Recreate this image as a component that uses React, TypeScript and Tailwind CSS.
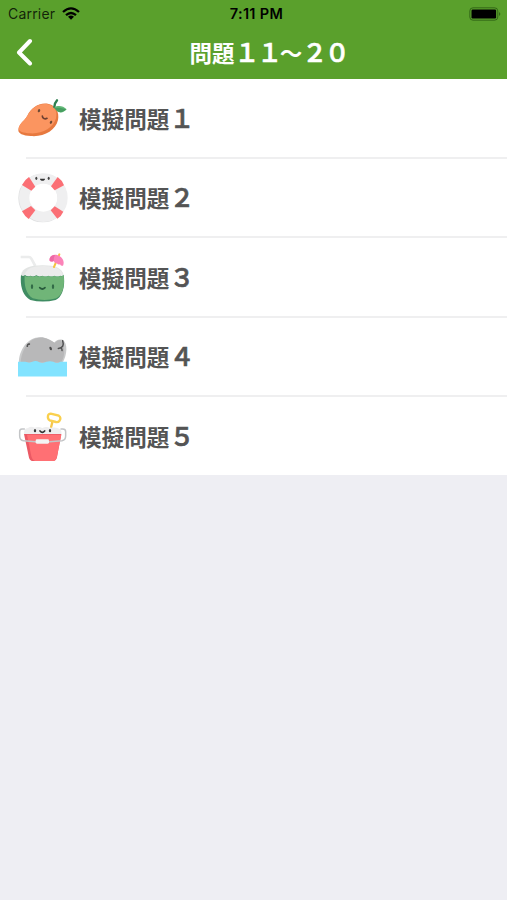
import type { ReactNode } from 'react'

interface Item {
  id: number
  label: string
  digit: string
  icon: ReactNode
}

function MangoIcon() {
  return (
    <svg width="50" height="50" viewBox="24 24 150 150" fill="none">
      <path d="M25 134C27 116 42 110 52 92C64 68 88 51 116 57C137 61 149 82 144 105C137 136 101 157 62 153C39 151 24 146 25 134Z" fill="#e7793f" />
      <path d="M26 129C29 114 43 108 53 91C65 68 88 53 114 58C134 62 143 80 138 100C130 129 97 147 61 145C40 144 25 140 26 129Z" fill="#fb9560" />
      <path d="M133 66C134 57 136 51 141 46" stroke="#2f7f50" strokeWidth="7" strokeLinecap="round" />
      <path d="M133 67C142 60 160 61 170 73C159 86 143 87 133 67Z" fill="#62b878" />
      <path d="M134 69C145 67 157 69 169 73C157 85 142 85 134 69Z" fill="#469e60" />
      <ellipse cx="87" cy="77" rx="3.5" ry="5" fill="#6e4a35" transform="rotate(25 87 77)" />
      <ellipse cx="123" cy="112" rx="3.5" ry="5" fill="#6e4a35" transform="rotate(25 123 112)" />
      <path d="M97 93C97 101 105 103 111 100" stroke="#6e4030" strokeWidth="5" strokeLinecap="round" />
    </svg>
  )
}

function LifebuoyIcon() {
  return (
    <svg width="50" height="50" viewBox="24 30 150 150" fill="none">
      <circle cx="98" cy="105" r="59" stroke="#dedfe0" strokeWidth="28" />
      <circle cx="100" cy="104" r="57.5" stroke="#efeff0" strokeWidth="31" />
      <path d="M36 66Q44 50 57 42L76 71L64 83Z" fill="#fb6f75" />
      <path d="M143 42Q156 51 162 67L134 82L123 70Z" fill="#fb6f75" />
      <path d="M36 145L63 129L76 142L56 168Q44 160 36 145Z" fill="#fb6f75" />
      <path d="M134 130L160 146Q154 160 142 167L122 142Z" fill="#fb6f75" />
      <ellipse cx="79" cy="46" rx="3" ry="5" fill="#444" />
      <ellipse cx="116" cy="46" rx="3" ry="5" fill="#444" />
      <path d="M90 47C90 55 105 55 105 47Z" fill="#333" />
    </svg>
  )
}

function CoconutIcon() {
  return (
    <svg width="50" height="50" viewBox="24 27 150 150" fill="none">
      <path d="M32 42H57Q61 42 64 47L76 69" stroke="#ebecec" strokeWidth="8" />
      <path d="M33 95C39 75 58 67 98 67C137 67 155 76 161 96L158 110H36Z" fill="#e2e4e3" />
      <path d="M44 96C49 77 66 69 100 69C137 69 154 78 159 96L157 108H48Z" fill="#ececec" />
      <path d="M33 96Q39 102 45 96Q53 103 61 98Q70 103 79 97Q88 103 97 98Q106 103 115 98Q124 103 133 98Q142 103 151 98Q156 101 161 96C166 126 159 161 137 171Q98 180 61 171C36 157 30 125 33 96Z" fill="#3f8c62" />
      <path d="M44 98Q53 104 61 99Q70 104 79 98Q88 104 97 99Q106 104 115 99Q124 104 133 99Q142 104 151 99Q156 101 161 97C165 128 158 156 139 166Q104 176 68 166C48 153 42 126 44 98Z" fill="#70b578" />
      <ellipse cx="66" cy="131" rx="3.5" ry="7" fill="#326b47" />
      <ellipse cx="129" cy="131" rx="3.5" ry="7" fill="#326b47" />
      <path d="M89 134Q97 142 105 134" stroke="#285b3c" strokeWidth="5" strokeLinecap="round" />
      <path d="M148 34L132 72" stroke="#f4c342" strokeWidth="6" strokeLinecap="round" />
      <path d="M119 53C117 40 130 32 143 37C157 42 165 55 159 68Q153 70 150 64Q144 66 140 60Q134 62 131 54Q125 58 119 53Z" fill="#fb83b8" />
      <path d="M119 53C117 43 125 36 135 36Q130 45 131 54Q125 58 119 53Z" fill="#ed69a5" />
    </svg>
  )
}

function ManateeIcon() {
  return (
    <svg width="50" height="50" viewBox="24 21.5 150 150" fill="none">
      <path d="M27 114C26 78 51 37 91 37C109 37 121 45 133 54C137 46 147 42 158 45C174 56 172 89 158 114Z" fill="#c9cacb" />
      <path d="M32 114C34 77 56 39 91 38C109 38 121 46 134 54Q143 44 153 46C166 68 166 94 153 114Z" fill="#b8b8b9" />
      <path d="M52 64Q52 57 58 58" stroke="#555" strokeWidth="5" strokeLinecap="round" />
      <ellipse cx="122" cy="71" rx="3.5" ry="5.5" fill="#4c4c4c" transform="rotate(-25 122 71)" />
      <path d="M158 48C162 61 159 69 145 71M153 70Q157 72 156 77" stroke="#505051" strokeWidth="4.5" strokeLinecap="round" />
      <path d="M24 111H46Q58 116 67 111Q77 106 88 112Q98 117 109 111Q120 107 130 111Q142 118 151 111H171V155H24Z" fill="#82e3ff" />
    </svg>
  )
}

function BucketIcon() {
  return (
    <svg width="50" height="50" viewBox="24 26 150 150" fill="none">
      <path d="M123 76L127 59" stroke="#f5c64b" strokeWidth="7" />
      <path d="M122 34L146 40Q155 47 148 56Q145 60 138 59L119 54Q112 49 114 40Q116 34 122 34Z" stroke="#fad04e" strokeWidth="7" />
      <path d="M42 96Q41 77 54 77Q63 70 74 76Q87 72 97 77Q109 71 121 77Q135 73 144 78Q157 80 154 97Z" fill="#eeeeef" />
      <path d="M42 95H154L141 165Q139 176 129 176H70Q60 176 57 166Z" fill="#eb5964" />
      <path d="M51 97H154L141 162Q139 176 129 176H76Q67 174 64 162Z" fill="#ff7074" />
      <path d="M43 80H36Q29 80 29 88V101Q29 114 40 115L77 118M119 118L156 115Q167 113 167 101V88Q167 80 158 80H153" stroke="#c3c5c7" strokeWidth="4.5" strokeLinecap="round" />
      <rect x="77" y="111" width="40" height="13" rx="4" fill="#f4f4f4" />
      <ellipse cx="75" cy="85" rx="3.5" ry="5" fill="#3b3b3b" />
      <ellipse cx="120" cy="85" rx="3.5" ry="5" fill="#3b3b3b" />
      <path d="M90 86Q97 94 104 86" stroke="#333" strokeWidth="5" strokeLinecap="round" />
    </svg>
  )
}

const ITEMS: Item[] = [
  { id: 1, label: '模擬問題', digit: '１', icon: <MangoIcon /> },
  { id: 2, label: '模擬問題', digit: '２', icon: <LifebuoyIcon /> },
  { id: 3, label: '模擬問題', digit: '３', icon: <CoconutIcon /> },
  { id: 4, label: '模擬問題', digit: '４', icon: <ManateeIcon /> },
  { id: 5, label: '模擬問題', digit: '５', icon: <BucketIcon /> },
]

// full-width digits sit a little larger than the kanji
function Digits({ children }: { children: string }) {
  return (
    <span className="text-[25px] leading-none font-medium tracking-[-2.4px] [-webkit-text-stroke:0.7px_currentColor]">
      {children}
    </span>
  )
}

function StatusBar() {
  return (
    <div className="grid h-[27px] grid-cols-3 items-center pl-2 font-['Inter','Liberation_Sans',sans-serif] text-[14px] text-black/80">
      <div className="flex items-center gap-[7px]">
        <span className="tracking-[0.2px]">Carrier</span>
        <svg width="18" height="13" viewBox="0 0 18 13" fill="none" stroke="black" strokeWidth="2.3">
          <path d="M1 5Q9 -2.2 17 5" />
          <path d="M4 8.2Q9 3.8 14 8.2" />
          <path d="M9 12.7L6 9.8Q9 7.4 12 9.8Z" fill="black" stroke="none" />
        </svg>
      </div>
      <span className="pr-[2px] text-center text-[14.5px] font-semibold tracking-[0.35px] text-black">7:11 PM</span>
      <svg className="mr-[5px] justify-self-end" width="33" height="14" viewBox="0 0 33 14" fill="none">
        <rect x="0.8" y="0.8" width="28" height="12.4" rx="3.2" stroke="#24510f" strokeOpacity="0.7" />
        <rect x="2.5" y="2.5" width="24.6" height="9" rx="1.2" fill="black" />
        <path d="M30.3 5Q32.2 7 30.3 9Z" fill="#24510f" />
      </svg>
    </div>
  )
}

export default function App() {
  return (
    <div className="min-h-screen bg-[#eeeef3] font-['Noto_Sans_CJK_JP',sans-serif]">
      <header className="h-[79px] bg-[#5aa02c]">
        <StatusBar />
        <div className="grid h-[50px] grid-cols-[30px_1fr] items-center pr-4 pl-4">
          <button aria-label="戻る">
            <svg width="18" height="28" viewBox="0 0 18 28" fill="none" stroke="white" strokeWidth="4" strokeLinecap="round" strokeLinejoin="round">
              <path d="M14 3L3 14.5L14 25.5" />
            </svg>
          </button>
          <h1 className="pb-px text-center text-[22.5px] leading-none font-bold text-white">
            問題<Digits>１１</Digits>～<Digits>２０</Digits>
          </h1>
        </div>
      </header>

      <ul className="bg-white">
        {ITEMS.map((item, i) => (
          <li key={item.id} className="h-[79.5px] last:h-[78px]">
            <button className="flex h-[77.5px] w-full items-center gap-[11px] pt-px pl-[18px] text-left">
              {item.icon}
              <span className="pb-px text-[22.6px] leading-none font-bold text-[#545454]">
                {item.label}
                <Digits>{item.digit}</Digits>
              </span>
            </button>
            {i < ITEMS.length - 1 && <div className="ml-[26px] h-[2px] bg-[#efeff0]" />}
          </li>
        ))}
      </ul>
    </div>
  )
}
